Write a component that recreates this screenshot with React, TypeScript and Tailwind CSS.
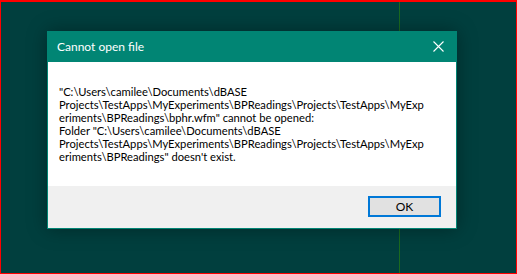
const lines = [
  '"C:\\Users\\camilee\\Documents\\dBASE',
  'Projects\\TestApps\\MyExperiments\\BPReadings\\Projects\\TestApps\\MyExp',
  'eriments\\BPReadings\\bphr.wfm" cannot be opened:',
  'Folder "C:\\Users\\camilee\\Documents\\dBASE',
  'Projects\\TestApps\\MyExperiments\\BPReadings\\Projects\\TestApps\\MyExp',
  'eriments\\BPReadings" doesn\'t exist.',
];

export default function App() {
  return (
    <div className="relative h-[274px] w-[517px] overflow-hidden border border-t-2 border-[#ff0000] bg-[#013f3e] font-['Lato',sans-serif]">
      {/* desktop guide line */}
      <div className="absolute left-[398px] top-0 h-full w-px bg-[#1b6a1f]" />

      {/* message box */}
      <div className="absolute left-[46px] top-[29px] flex h-[198px] w-[410px] flex-col border border-[#018574] bg-white shadow-[0_0_18px_rgba(0,0,0,0.35)]">
        <div className="flex h-[30px] items-center justify-between bg-[#018574] pb-px pl-[9px] pr-[10px] text-[12px] text-white">
          <span>Cannot open file</span>
          <svg width="11" height="11" viewBox="0 0 11 11" className="mr-[2px]">
            <path d="M0.5 0.5 L10.5 10.5 M10.5 0.5 L0.5 10.5" stroke="white" strokeWidth="1.1" />
          </svg>
        </div>
        <div className="h-[124px] pl-[11px] pt-[23px] text-[11.2px] leading-[13px] text-black">
          {lines.map((l, i) => (
            <div key={i} className="whitespace-nowrap">
              {l}
            </div>
          ))}
        </div>
        <div className="flex flex-1 items-start justify-end bg-[#f0f0f0] pr-[15px] pt-[10px]">
          <button className="h-[21px] w-[73px] border-2 border-[#0078d7] bg-[#e1e1e1] text-[12px] leading-none text-black">
            OK
          </button>
        </div>
      </div>
    </div>
  );
}
